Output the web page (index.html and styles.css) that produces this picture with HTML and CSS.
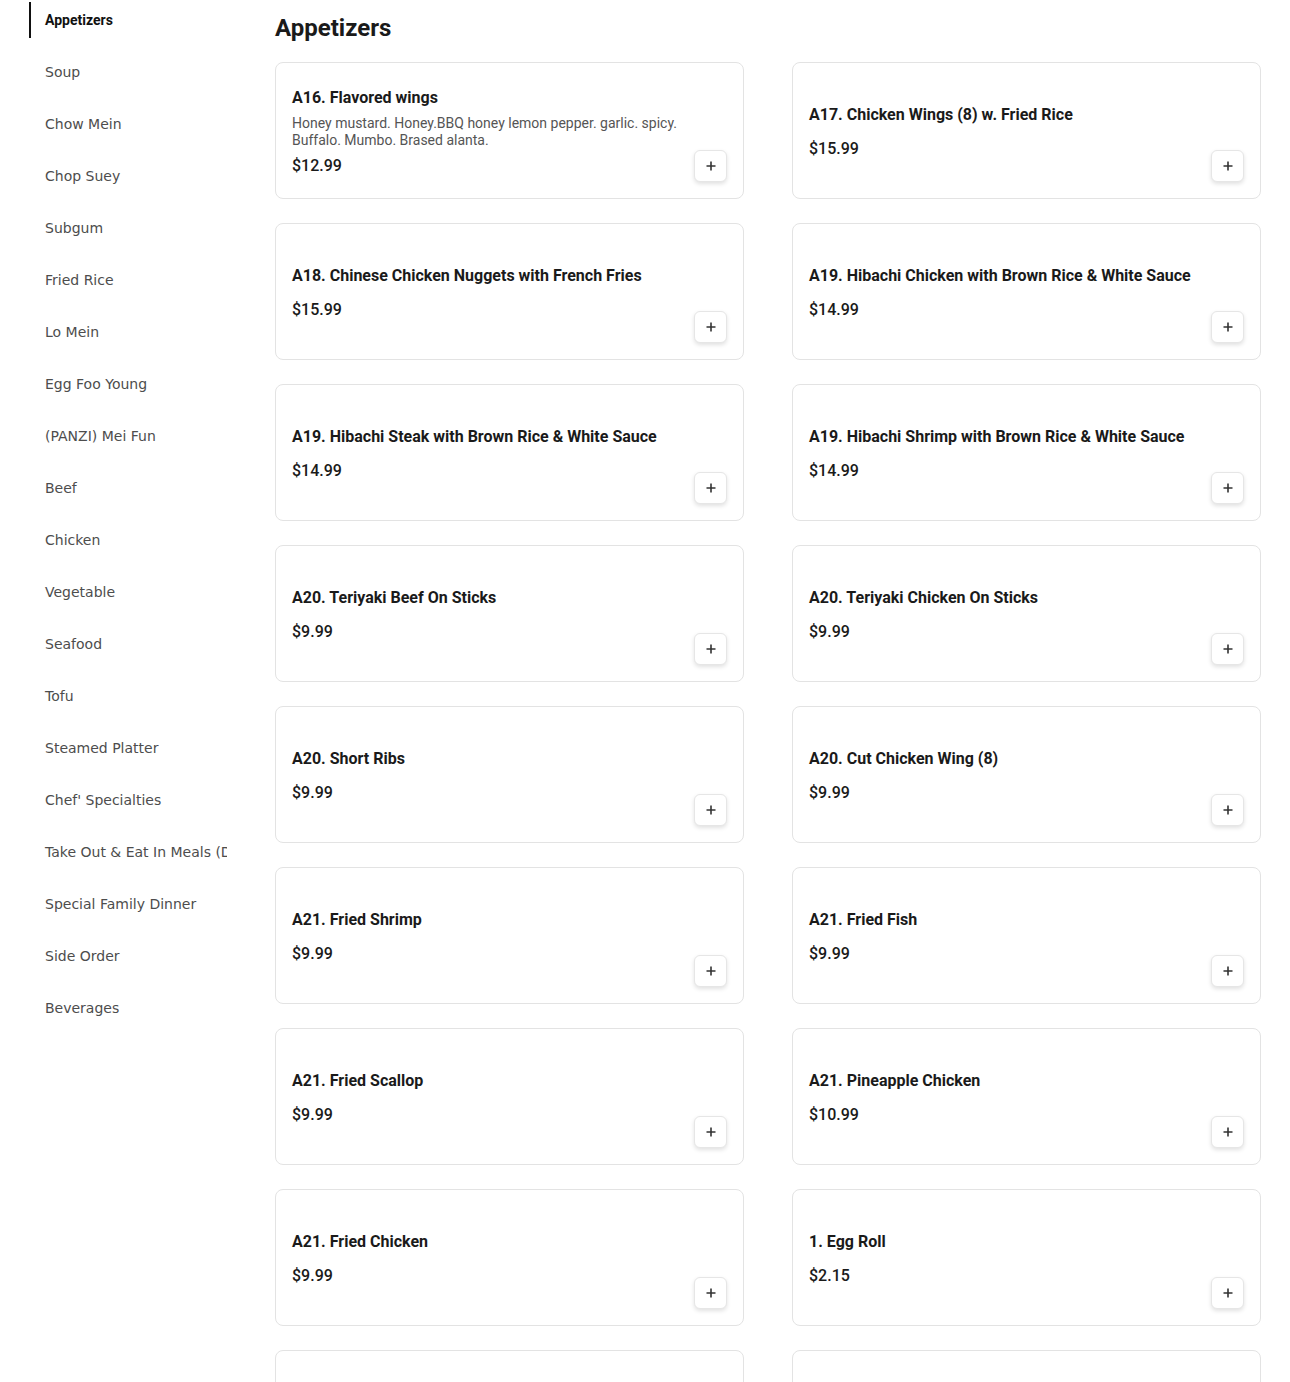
FILE: index.html
```html
<!DOCTYPE html>
<html lang="en">
<head>
<meta charset="utf-8">
<title>Menu</title>
<link rel="stylesheet" href="styles.css">
</head>
<body>
<div class="page">
  <nav class="sidebar">
    <a class="cat cat--active">Appetizers</a>
    <a class="cat">Soup</a>
    <a class="cat">Chow Mein</a>
    <a class="cat">Chop Suey</a>
    <a class="cat">Subgum</a>
    <a class="cat">Fried Rice</a>
    <a class="cat">Lo Mein</a>
    <a class="cat">Egg Foo Young</a>
    <a class="cat">(PANZI) Mei Fun</a>
    <a class="cat">Beef</a>
    <a class="cat">Chicken</a>
    <a class="cat">Vegetable</a>
    <a class="cat">Seafood</a>
    <a class="cat">Tofu</a>
    <a class="cat">Steamed Platter</a>
    <a class="cat">Chef' Specialties</a>
    <a class="cat">Take Out &amp; Eat In Meals (Dinner)</a>
    <a class="cat">Special Family Dinner</a>
    <a class="cat">Side Order</a>
    <a class="cat">Beverages</a>
  </nav>
  <main class="main">
    <h1 class="section-title">Appetizers</h1>
    <div class="grid">
      <div class="card">
        <div class="info">
          <div class="name">A16. Flavored wings</div>
          <div class="desc">Honey mustard. Honey.BBQ honey lemon pepper. garlic. spicy. Buffalo. Mumbo. Brased alanta.</div>
          <div class="price">$12.99</div>
        </div>
        <button class="add"><svg viewBox="0 0 12 12" width="12" height="12"><path d="M6 1.5v9M1.5 6h9" stroke="#333" stroke-width="1.6" fill="none"/></svg></button>
      </div>
      <div class="card">
        <div class="info"><div class="name">A17. Chicken Wings (8) w. Fried Rice</div><div class="price">$15.99</div></div>
        <button class="add"><svg viewBox="0 0 12 12" width="12" height="12"><path d="M6 1.5v9M1.5 6h9" stroke="#333" stroke-width="1.6" fill="none"/></svg></button>
      </div>
      <div class="card">
        <div class="info"><div class="name">A18. Chinese Chicken Nuggets with French Fries</div><div class="price">$15.99</div></div>
        <button class="add"><svg viewBox="0 0 12 12" width="12" height="12"><path d="M6 1.5v9M1.5 6h9" stroke="#333" stroke-width="1.6" fill="none"/></svg></button>
      </div>
      <div class="card">
        <div class="info"><div class="name">A19. Hibachi Chicken with Brown Rice &amp; White Sauce</div><div class="price">$14.99</div></div>
        <button class="add"><svg viewBox="0 0 12 12" width="12" height="12"><path d="M6 1.5v9M1.5 6h9" stroke="#333" stroke-width="1.6" fill="none"/></svg></button>
      </div>
      <div class="card">
        <div class="info"><div class="name">A19. Hibachi Steak with Brown Rice &amp; White Sauce</div><div class="price">$14.99</div></div>
        <button class="add"><svg viewBox="0 0 12 12" width="12" height="12"><path d="M6 1.5v9M1.5 6h9" stroke="#333" stroke-width="1.6" fill="none"/></svg></button>
      </div>
      <div class="card">
        <div class="info"><div class="name">A19. Hibachi Shrimp with Brown Rice &amp; White Sauce</div><div class="price">$14.99</div></div>
        <button class="add"><svg viewBox="0 0 12 12" width="12" height="12"><path d="M6 1.5v9M1.5 6h9" stroke="#333" stroke-width="1.6" fill="none"/></svg></button>
      </div>
      <div class="card">
        <div class="info"><div class="name">A20. Teriyaki Beef On Sticks</div><div class="price">$9.99</div></div>
        <button class="add"><svg viewBox="0 0 12 12" width="12" height="12"><path d="M6 1.5v9M1.5 6h9" stroke="#333" stroke-width="1.6" fill="none"/></svg></button>
      </div>
      <div class="card">
        <div class="info"><div class="name">A20. Teriyaki Chicken On Sticks</div><div class="price">$9.99</div></div>
        <button class="add"><svg viewBox="0 0 12 12" width="12" height="12"><path d="M6 1.5v9M1.5 6h9" stroke="#333" stroke-width="1.6" fill="none"/></svg></button>
      </div>
      <div class="card">
        <div class="info"><div class="name">A20. Short Ribs</div><div class="price">$9.99</div></div>
        <button class="add"><svg viewBox="0 0 12 12" width="12" height="12"><path d="M6 1.5v9M1.5 6h9" stroke="#333" stroke-width="1.6" fill="none"/></svg></button>
      </div>
      <div class="card">
        <div class="info"><div class="name">A20. Cut Chicken Wing (8)</div><div class="price">$9.99</div></div>
        <button class="add"><svg viewBox="0 0 12 12" width="12" height="12"><path d="M6 1.5v9M1.5 6h9" stroke="#333" stroke-width="1.6" fill="none"/></svg></button>
      </div>
      <div class="card">
        <div class="info"><div class="name">A21. Fried Shrimp</div><div class="price">$9.99</div></div>
        <button class="add"><svg viewBox="0 0 12 12" width="12" height="12"><path d="M6 1.5v9M1.5 6h9" stroke="#333" stroke-width="1.6" fill="none"/></svg></button>
      </div>
      <div class="card">
        <div class="info"><div class="name">A21. Fried Fish</div><div class="price">$9.99</div></div>
        <button class="add"><svg viewBox="0 0 12 12" width="12" height="12"><path d="M6 1.5v9M1.5 6h9" stroke="#333" stroke-width="1.6" fill="none"/></svg></button>
      </div>
      <div class="card">
        <div class="info"><div class="name">A21. Fried Scallop</div><div class="price">$9.99</div></div>
        <button class="add"><svg viewBox="0 0 12 12" width="12" height="12"><path d="M6 1.5v9M1.5 6h9" stroke="#333" stroke-width="1.6" fill="none"/></svg></button>
      </div>
      <div class="card">
        <div class="info"><div class="name">A21. Pineapple Chicken</div><div class="price">$10.99</div></div>
        <button class="add"><svg viewBox="0 0 12 12" width="12" height="12"><path d="M6 1.5v9M1.5 6h9" stroke="#333" stroke-width="1.6" fill="none"/></svg></button>
      </div>
      <div class="card">
        <div class="info"><div class="name">A21. Fried Chicken</div><div class="price">$9.99</div></div>
        <button class="add"><svg viewBox="0 0 12 12" width="12" height="12"><path d="M6 1.5v9M1.5 6h9" stroke="#333" stroke-width="1.6" fill="none"/></svg></button>
      </div>
      <div class="card">
        <div class="info"><div class="name">1. Egg Roll</div><div class="price">$2.15</div></div>
        <button class="add"><svg viewBox="0 0 12 12" width="12" height="12"><path d="M6 1.5v9M1.5 6h9" stroke="#333" stroke-width="1.6" fill="none"/></svg></button>
      </div>
      <div class="card">
        <div class="info"><div class="name">2. Spring Roll</div><div class="price">$2.15</div></div>
        <button class="add"><svg viewBox="0 0 12 12" width="12" height="12"><path d="M6 1.5v9M1.5 6h9" stroke="#333" stroke-width="1.6" fill="none"/></svg></button>
      </div>
      <div class="card">
        <div class="info"><div class="name">3. Shrimp Egg Roll</div><div class="price">$2.45</div></div>
        <button class="add"><svg viewBox="0 0 12 12" width="12" height="12"><path d="M6 1.5v9M1.5 6h9" stroke="#333" stroke-width="1.6" fill="none"/></svg></button>
      </div>
    </div>
  </main>
</div>
</body>
</html>
```
FILE: styles.css
```css
* { box-sizing: border-box; }
html, body { margin: 0; padding: 0; background: #fff; }
body { font-family: Roboto, "Liberation Sans", sans-serif; color: #1a1a1a; }

.page {
  display: flex;
  gap: 48px;
  padding: 2px 29px 0 29px;
}

.sidebar {
  width: 198px;
  flex: none;
  display: flex;
  flex-direction: column;
  gap: 16px;
}

.cat {
  display: flex;
  align-items: center;
  height: 36px;
  padding-left: 16px;
  font-family: "DejaVu Sans", sans-serif;
  font-size: 14px;
  color: #4d4d4d;
  white-space: nowrap;
  overflow: hidden;
  cursor: pointer;
}

.cat--active {
  border-left: 2px solid #111;
  padding-left: 14px;
  font-family: Roboto, sans-serif;
  font-weight: 700;
  color: #111;
}

.main { flex: 1; min-width: 0; }

.section-title {
  margin: 12px 0 19px;
  font-size: 24px;
  line-height: 29px;
  font-weight: 700;
  color: #1a1a1a;
}

.grid {
  display: grid;
  grid-template-columns: 1fr 1fr;
  column-gap: 48px;
  row-gap: 24px;
}

.card {
  height: 137px;
  border: 1px solid #e3e3e3;
  border-radius: 8px;
  padding: 16px;
  display: flex;
  align-items: stretch;
  gap: 12px;
}

.info {
  flex: 1;
  min-width: 0;
  display: flex;
  flex-direction: column;
  justify-content: center;
  padding-top: 3px;
}

.name {
  margin-bottom: 7px;
  font-size: 16px;
  line-height: 20px;
  font-weight: 700;
  color: #1a1a1a;
}

.desc {
  font-size: 14px;
  line-height: 16.8px;
  color: #555;
}

.price {
  margin-top: 7px;
  font-size: 16px;
  line-height: 20px;
  font-weight: 500;
  color: #1a1a1a;
}

.add {
  align-self: flex-end;
  flex: none;
  width: 33px;
  height: 32px;
  padding: 0;
  border: 1px solid #e6e6e6;
  border-radius: 6px;
  background: #fff;
  box-shadow: 0 2px 4px rgba(0, 0, 0, 0.12);
  display: flex;
  align-items: center;
  justify-content: center;
  cursor: pointer;
}
```
